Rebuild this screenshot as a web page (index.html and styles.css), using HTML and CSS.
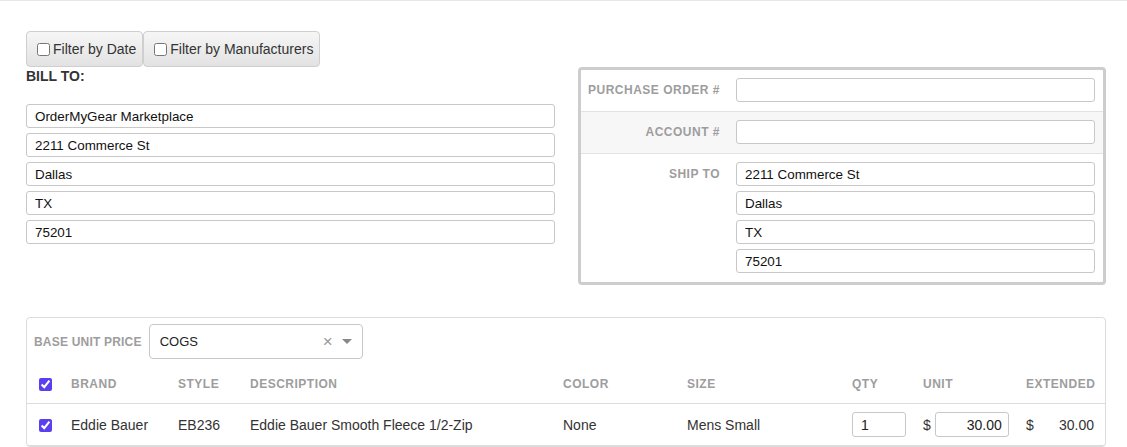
FILE: index.html
```html
<!DOCTYPE html>
<html>
<head>
    <title>Purchase Order</title>
    <link rel="stylesheet" href="styles.css">
</head>
<body>
    <div class="page">
        <div class="filters">
            <label class="filter-btn"><input type="checkbox"> Filter by Date</label>
            <label class="filter-btn"><input type="checkbox"> Filter by Manufacturers</label>
        </div>

        <div class="top">
            <div class="bill-to">
                <div class="section-title">BILL TO:</div>
                <div class="stack">
                    <input type="text" class="field" value="OrderMyGear Marketplace">
                    <input type="text" class="field" value="2211 Commerce St">
                    <input type="text" class="field" value="Dallas">
                    <input type="text" class="field" value="TX">
                    <input type="text" class="field" value="75201">
                </div>
            </div>

            <div class="order-panel">
                <div class="panel-row">
                    <div class="panel-label">PURCHASE ORDER #</div>
                    <div class="stack"><input type="text" class="field"></div>
                </div>
                <div class="panel-row shaded">
                    <div class="panel-label">ACCOUNT #</div>
                    <div class="stack"><input type="text" class="field"></div>
                </div>
                <div class="panel-row last">
                    <div class="panel-label">SHIP TO</div>
                    <div class="stack">
                        <input type="text" class="field" value="2211 Commerce St">
                        <input type="text" class="field" value="Dallas">
                        <input type="text" class="field" value="TX">
                        <input type="text" class="field" value="75201">
                    </div>
                </div>
            </div>
        </div>

        <div class="items">
            <div class="price-bar">
                <span class="caps">BASE UNIT PRICE</span>
                <div class="select">
                    <span class="select-value">COGS</span>
                    <span class="select-clear">&times;</span>
                    <span class="select-arrow"></span>
                </div>
            </div>
            <table class="item-table">
                <colgroup>
                    <col style="width:32px">
                    <col style="width:107px">
                    <col style="width:72px">
                    <col style="width:313px">
                    <col style="width:124px">
                    <col style="width:165px">
                    <col style="width:71px">
                    <col style="width:103px">
                    <col style="width:91px">
                </colgroup>
                <thead>
                    <tr>
                        <th class="check-cell"><input type="checkbox" checked></th>
                        <th>BRAND</th>
                        <th>STYLE</th>
                        <th>DESCRIPTION</th>
                        <th>COLOR</th>
                        <th>SIZE</th>
                        <th>QTY</th>
                        <th>UNIT</th>
                        <th class="right">EXTENDED</th>
                    </tr>
                </thead>
                <tbody>
                    <tr>
                        <td class="check-cell"><input type="checkbox" checked></td>
                        <td>Eddie Bauer</td>
                        <td>EB236</td>
                        <td>Eddie Bauer Smooth Fleece 1/2-Zip</td>
                        <td>None</td>
                        <td>Mens Small</td>
                        <td><input type="text" class="qty" value="1"></td>
                        <td><div class="money">$<input type="text" class="unit" value="30.00"></div></td>
                        <td><div class="money total"><span>$</span><span>30.00</span></div></td>
                    </tr>
                </tbody>
            </table>
        </div>
    </div>
</body>
</html>
```

FILE: styles.css
```css
body {
    margin: 0;
    font-family: 'Liberation Sans', Arial, sans-serif;
    color: #222;
    background-color: #fff;
    border-top: 1px solid #e8e8e8;
}

.page {
    padding: 30px 21px 0 26px;
}

/* filter buttons */
.filters {
    display: flex;
}

.filter-btn {
    display: flex;
    align-items: center;
    gap: 3px;
    height: 36px;
    box-sizing: border-box;
    padding: 0 6px 0 10px;
    font-size: 14px;
    color: #333;
    background: linear-gradient(#f6f6f6, #e2e2e2);
    border: 1px solid #cfcfcf;
    border-radius: 4px;
}

.filter-btn input {
    margin: 0;
    width: 13px;
    height: 13px;
}

/* bill to / ship to */
.top {
    display: flex;
    justify-content: space-between;
    align-items: flex-start;
}

.bill-to {
    width: 529px;
}

.section-title {
    font-size: 14px;
    font-weight: bold;
    color: #333;
    line-height: 18px;
    margin-bottom: 19px;
}

.stack {
    display: flex;
    flex-direction: column;
    gap: 5px;
    flex: 1;
}

.field {
    height: 24px;
    box-sizing: border-box;
    padding: 0 8px;
    font-family: 'Liberation Sans', Arial, sans-serif;
    font-size: 13.4px;
    color: #111;
    border: 1px solid #c8c8c8;
    border-radius: 3px;
    outline: none;
    width: 100%;
}

.order-panel {
    width: 528px;
    box-sizing: border-box;
    border: 3px solid #cdcdcd;
    border-radius: 4px;
}

.panel-row {
    display: flex;
    padding: 8px 8px 9px 0;
    border-bottom: 1px solid #e3e3e3;
}

.panel-row.shaded {
    background-color: #f7f7f7;
}

.panel-row.last {
    border-bottom: none;
    padding-bottom: 9px;
}

.panel-label,
.caps,
.item-table th {
    font-size: 12px;
    font-weight: bold;
    color: #9d9d9d;
    letter-spacing: 0.5px;
}

.panel-label {
    width: 139px;
    flex-shrink: 0;
    padding-right: 16px;
    text-align: right;
    line-height: 24px;
}

/* items table */
.items {
    margin-top: 32px;
    border: 1px solid #dcdcdc;
    border-radius: 4px;
}

.price-bar {
    display: flex;
    align-items: center;
    gap: 7px;
    padding: 6px 7px 0 7px;
}

.caps {
    letter-spacing: 0.2px;
}

.select {
    width: 214px;
    height: 35px;
    box-sizing: border-box;
    border: 1px solid #c8c8c8;
    border-radius: 4px;
    display: flex;
    align-items: center;
    padding-left: 10px;
}

.select-value {
    font-size: 13px;
    color: #222;
    flex: 1;
}

.select-clear {
    color: #999;
    font-size: 17px;
    margin-right: 9px;
}

.select-arrow {
    width: 0;
    height: 0;
    border-left: 5px solid transparent;
    border-right: 5px solid transparent;
    border-top: 5px solid #888;
    margin-right: 10px;
}

.item-table {
    width: 100%;
    table-layout: fixed;
    border-collapse: collapse;
}

.item-table th {
    text-align: left;
    height: 33px;
    vertical-align: bottom;
    padding: 0 0 11px 12px;
    line-height: 16px;
    border-bottom: 1px solid #dcdcdc;
}

.item-table td {
    font-size: 14px;
    color: #333;
    height: 41px;
    padding: 0 0 0 12px;
    border-bottom: 1px solid #dcdcdc;
}

.item-table .right {
    text-align: right;
    padding-right: 11px;
}

.check-cell input {
    margin: 0;
    width: 13px;
    height: 13px;
    accent-color: #5a3ff0;
    vertical-align: middle;
}

.qty,
.unit {
    height: 25px;
    box-sizing: border-box;
    border: 1px solid #c8c8c8;
    border-radius: 3px;
    font-family: 'Liberation Sans', Arial, sans-serif;
    font-size: 14px;
    color: #222;
    outline: none;
}

.qty {
    width: 54px;
    padding: 0 8px;
}

.money {
    display: flex;
    align-items: center;
    gap: 4px;
}

.unit {
    width: 74px;
    padding: 0 6px;
    text-align: right;
}

.money.total {
    justify-content: space-between;
    padding-right: 11px;
}
```
